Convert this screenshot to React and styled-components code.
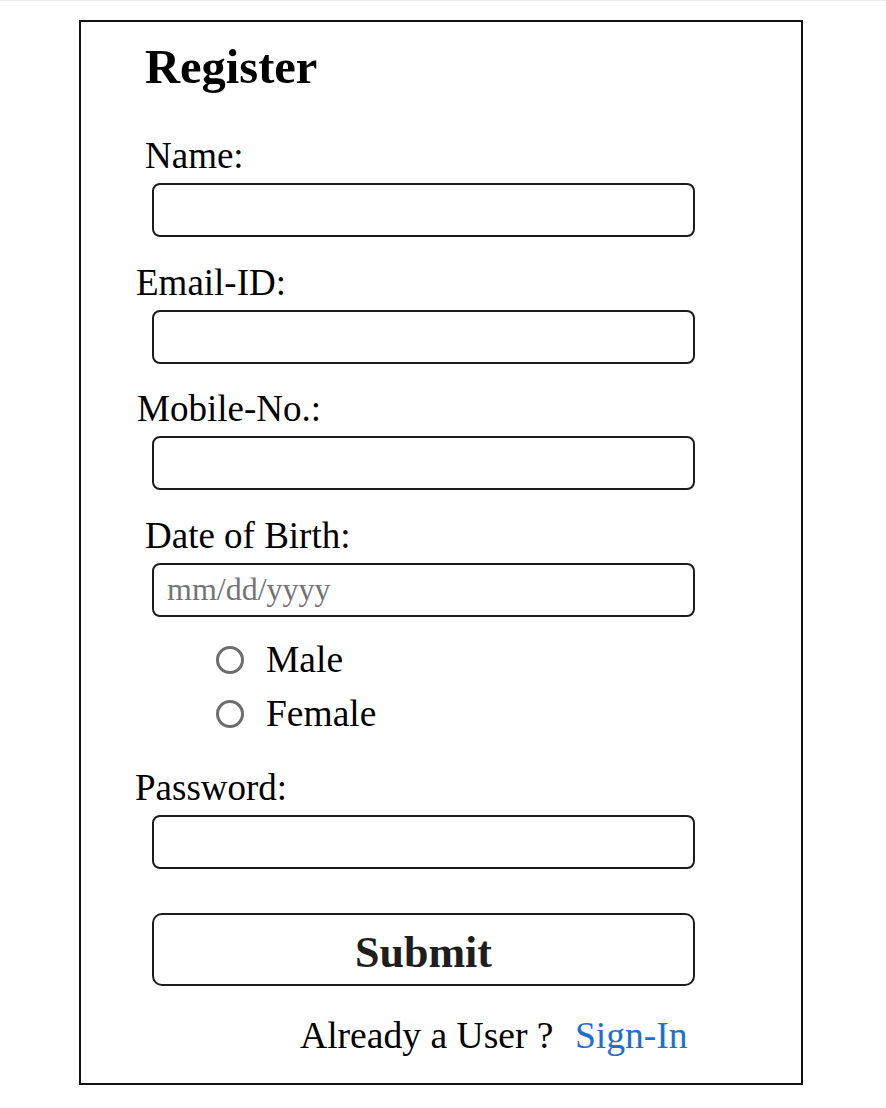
import React from 'react';
import styled, { createGlobalStyle } from 'styled-components';

const GlobalStyle = createGlobalStyle`
    html, body {
        margin: 0;
        padding: 0;
        background: #fff;
    }
    body {
        font-family: "Liberation Serif", "Times New Roman", serif;
        color: #000;
        border-top: 1px solid #ececec;
    }
`

const Page = styled.div`
    padding-top: 19px;
    padding-left: 79px;
    padding-bottom: 22px;
`

const Card = styled.form`
    box-sizing: border-box;
    width: 724px;
    border: 2px solid #111;
    padding: 17px 0 26px 0;
    display: flex;
    flex-direction: column;
    align-items: flex-start;
`

const Title = styled.h1`
    margin: 0 0 0 64px;
    font-size: 48.5px;
    line-height: 56px;
    font-weight: bold;
`

const Label = styled.label`
    display: block;
    margin-top: ${props => props.$top}px;
    margin-left: ${props => props.$indent}px;
    font-size: 37px;
    line-height: 42px;
`

const Input = styled.input`
    box-sizing: border-box;
    display: block;
    width: 543px;
    height: 54px;
    margin: 6px 0 0 71px;
    padding: 0 13px;
    border: 2px solid #1c1c1c;
    border-radius: 8px;
    background: #fff;
    font-family: "Liberation Serif", "Times New Roman", serif;
    font-size: 32px;
    color: #000;
    outline: none;
    &::placeholder {
        color: #757575;
    }
`

const RadioGroup = styled.div`
    margin: 16.5px 0 0 135px;
    display: flex;
    flex-direction: column;
`

const RadioRow = styled.label`
    display: flex;
    align-items: center;
    gap: 22px;
    height: 54px;
    font-size: 37.5px;
    line-height: 54px;
`

const Radio = styled.input`
    appearance: none;
    box-sizing: border-box;
    width: 28px;
    height: 28px;
    margin: 0;
    border: 3px solid #6d6d6d;
    border-radius: 50%;
    background: #fff;
`

const SubmitButton = styled.button`
    box-sizing: border-box;
    width: 543px;
    height: 73px;
    margin: 44.5px 0 0 71px;
    padding: 6px 0 0 0;
    border: 2px solid #1c1c1c;
    border-radius: 10px;
    background: #fff;
    font-family: "Liberation Serif", "Times New Roman", serif;
    font-size: 44px;
    font-weight: bold;
    color: #1e1e1e;
    cursor: pointer;
`

const Footer = styled.p`
    margin: 28.5px 0 0 219px;
    font-size: 37.6px;
    line-height: 42px;
`

const SignIn = styled.a`
    margin-left: 12px;
    color: #1d6fd0;
    text-decoration: none;
`

const fields = [
    { id: 'name', label: 'Name:', indent: 64, top: 40, type: 'text' },
    { id: 'email', label: 'Email-ID:', indent: 55, top: 24.5, type: 'email' },
    { id: 'mobile', label: 'Mobile-No.:', indent: 56, top: 24.5, type: 'tel' },
    { id: 'dob', label: 'Date of Birth:', indent: 64, top: 24.5, type: 'text', placeholder: 'mm/dd/yyyy' },
]

export default function App() {
    return (
        <Page>
            <GlobalStyle />
            <Card onSubmit={e => e.preventDefault()}>
                <Title>Register</Title>
                {fields.map(f => (
                    <React.Fragment key={f.id}>
                        <Label htmlFor={f.id} $indent={f.indent} $top={f.top}>{f.label}</Label>
                        <Input id={f.id} type={f.type} placeholder={f.placeholder} />
                    </React.Fragment>
                ))}
                <RadioGroup>
                    <RadioRow>
                        <Radio type="radio" name="gender" value="male" />
                        Male
                    </RadioRow>
                    <RadioRow>
                        <Radio type="radio" name="gender" value="female" />
                        Female
                    </RadioRow>
                </RadioGroup>
                <Label htmlFor="password" $indent={54} $top={25.5}>Password:</Label>
                <Input id="password" type="password" />
                <SubmitButton type="submit">Submit</SubmitButton>
                <Footer>
                    Already a User ? <SignIn href="#">Sign-In</SignIn>
                </Footer>
            </Card>
        </Page>
    )
}
